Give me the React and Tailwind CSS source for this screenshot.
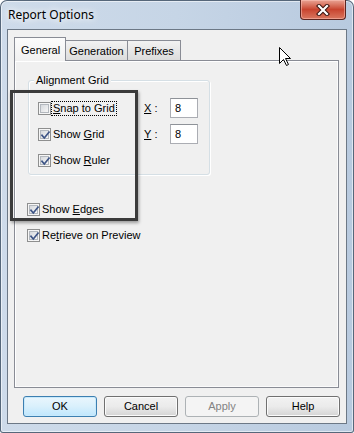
import React from "react";

function Check({ checked }) {
  return (
    <span className="relative w-[13px] h-[13px] shrink-0 border border-[#8e8f8f] bg-[#f6f6f6] p-px flex">
      <span className="flex-1 border border-[#b3b8be] bg-gradient-to-br from-[#d6d9dd] to-[#f7f7f7]" />
      {checked && (
        <svg className="absolute left-0 top-0" width="13" height="13" viewBox="0 0 13 13">
          <path d="M3 6.3 L5.3 9 L10 3.2" fill="none" stroke="#3e5586" strokeWidth="1.7" strokeLinecap="square" />
        </svg>
      )}
    </span>
  );
}

function CheckRow({ checked, children, focus }) {
  return (
    <div className="h-[26px] flex items-center">
      <Check checked={checked} />
      <span
        className={
          "ml-[1px] px-[1px] leading-[13px] " +
          (focus ? "outline outline-1 outline-dotted outline-black" : "")
        }
      >
        {children}
      </span>
    </div>
  );
}

function Btn({ children, variant }) {
  const base =
    "w-[74px] h-[21px] rounded-[3px] flex items-center justify-center text-[11px] leading-none ";
  if (variant === "default")
    return (
      <div className={base + "border border-[#3c7fb1] bg-gradient-to-b from-[#eaf6fd] via-[#d9f0fc] to-[#bee6fd] shadow-[inset_0_0_0_1px_#c8e9fb] text-black"}>
        {children}
      </div>
    );
  if (variant === "disabled")
    return (
      <div className={base + "border border-[#adb2b5] bg-[#f4f4f4] text-[#838383]"}>
        {children}
      </div>
    );
  return (
    <div className={base + "border border-[#707070] bg-gradient-to-b from-[#f2f2f2] via-[#ebebeb] to-[#d4d4d4] shadow-[inset_0_0_0_1px_#fbfbfb] text-black"}>
      {children}
    </div>
  );
}

function Input({ value }) {
  return (
    <div className="w-[28px] h-[20px] border border-[#abadb3] border-t-[#8e9298] bg-white flex items-center pl-[4px] text-[11px]">
      {value}
    </div>
  );
}

export default function App() {
  return (
    <div
      className="relative w-[354px] h-[433px] overflow-hidden rounded-t-[7px] rounded-b-[3px] bg-gradient-to-r from-[#cedbea] via-[#c6d5e6] to-[#b8cadf] shadow-[inset_0_0_0_1px_#56677a,inset_0_0_0_2px_rgba(255,255,255,0.55)] flex flex-col text-black"
      style={{ fontFamily: '"Liberation Sans", Arial, sans-serif' }}
    >
      {/* title bar */}
      <div className="h-[29px] flex items-start justify-between">
        <div
          className="pl-[8px] pt-[7px] text-[12px] leading-[16px] text-black [text-shadow:0_0_6px_#ffffff,0_0_10px_#ffffff]"
          style={{ fontFamily: '"Noto Sans", "Liberation Sans", sans-serif' }}
        >
          Report Options
        </div>
        <div className="mr-[8px] w-[46px] h-[20px] rounded-b-[4px] border border-t-0 border-[#5b2520] bg-gradient-to-b from-[#e8a394] via-[#c8442f] to-[#d9765f] shadow-[inset_0_0_0_1px_rgba(255,200,190,0.5)] flex items-center justify-center">
          <svg width="14" height="12" viewBox="0 0 14 12">
            <path d="M3 2 L11 10 M11 2 L3 10" stroke="#3a1410" strokeWidth="4.2" strokeLinecap="square" />
            <path d="M3 2 L11 10 M11 2 L3 10" stroke="#ffffff" strokeWidth="2.2" strokeLinecap="square" />
          </svg>
        </div>
      </div>

      {/* client area */}
      <div className="mx-[7px] h-[395px] border border-[#6c7886] bg-[#f0f0f0] flex flex-col text-[11px]">
        <div className="pt-[7px] pl-[6px] pr-[7px] flex flex-col">
          {/* tabs */}
          <div className="h-[23px] flex items-end">
            <div className="relative z-10 w-[52px] h-[24px] -mb-px border border-b-0 border-[#898c95] bg-gradient-to-b from-[#fcfcfc] to-[#f0f0f0] flex items-start pt-[4px] pl-[6px]">
              General
            </div>
            <div className="w-[62px] h-[20px] border border-l-0 border-b-0 border-[#898c95] bg-gradient-to-b from-[#f2f2f2] to-[#dcdcdc] flex items-center justify-center pt-px">
              Generation
            </div>
            <div className="w-[53px] h-[20px] border border-l-0 border-b-0 border-[#898c95] bg-gradient-to-b from-[#f2f2f2] to-[#dcdcdc] flex items-center justify-center pt-px">
              Prefixes
            </div>
          </div>
          {/* pane */}
          <div className="h-[328px] border border-[#898c95] bg-[#f0f0f0] shadow-[inset_1px_1px_0_#ffffff,inset_-1px_-1px_0_#fbfbfb] flex flex-col">
            <div className="relative mt-[19px] ml-[13px] w-[182px] h-[95px] rounded-[3px] border border-[#d5dfe5] shadow-[inset_1px_1px_0_#ffffff,1px_1px_0_#ffffff] pt-[14px] pl-[9px] flex">
              <span className="absolute left-[5px] -top-[8px] px-[2px] bg-[#f0f0f0] leading-[14px]">
                Alignment Grid
              </span>
              <div className="w-[106px] flex flex-col">
                <CheckRow focus>
                  <u>S</u>nap to Grid
                </CheckRow>
                <CheckRow checked>
                  Show <u>G</u>rid
                </CheckRow>
                <CheckRow checked>
                  Show <u>R</u>uler
                </CheckRow>
              </div>
              <div className="flex flex-col">
                <div className="h-[26px] flex items-center">
                  <span className="w-[26px]">
                    <u>X</u>&nbsp;:
                  </span>
                  <Input value="8" />
                </div>
                <div className="h-[26px] flex items-center">
                  <span className="w-[26px]">
                    <u>Y</u>&nbsp;:
                  </span>
                  <Input value="8" />
                </div>
              </div>
            </div>
            <div className="mt-[21px] pl-[12px] flex flex-col">
              <CheckRow checked>
                Show <u>E</u>dges
              </CheckRow>
              <CheckRow checked>
                Re<u>t</u>rieve on Preview
              </CheckRow>
            </div>
          </div>
        </div>
        {/* buttons */}
        <div className="mt-[8px] pl-[15px] flex gap-[7px]">
          <Btn variant="default">OK</Btn>
          <Btn>Cancel</Btn>
          <Btn variant="disabled">Apply</Btn>
          <Btn>Help</Btn>
        </div>
      </div>

      {/* annotation rectangle overlay */}
      <div className="absolute left-[10px] top-[90px] w-[128px] h-[131px] border-[3.5px] border-[#3b3b3b] shadow-[1px_2px_3px_rgba(0,0,0,0.35)] pointer-events-none" />

      {/* mouse cursor overlay */}
      <svg className="absolute left-[279px] top-[47px]" width="13" height="20" viewBox="0 0 13 20">
        <path d="M0.5 0.5 V16.5 L4.5 12.5 L7.5 18.5 L9.5 17.5 L6.5 11.5 H11.5 Z" fill="#ffffff" stroke="#000000" strokeWidth="1" strokeLinejoin="miter" />
      </svg>
    </div>
  );
}
